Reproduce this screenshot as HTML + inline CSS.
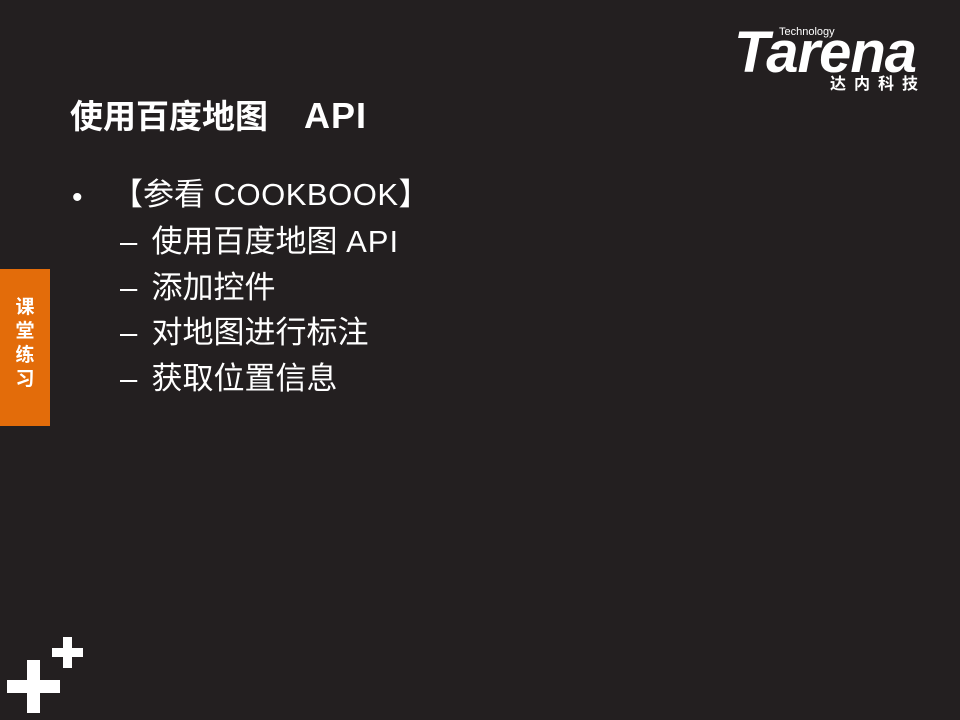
<!DOCTYPE html>
<html><head><meta charset="utf-8"><style>
body{margin:0;width:960px;height:720px;background:#231f20;position:relative;overflow:hidden;font-family:"Liberation Sans","Noto Sans CJK SC",sans-serif;color:#fff}
.a{position:absolute;white-space:nowrap}
.w{position:absolute;background:#fff}
.i{font-size:31px;line-height:40px}
</style></head><body>
<div class="a" style="left:70px;top:94px;font-size:33px;font-weight:bold;line-height:44px">使用百度地图<span style="margin-left:36px;font-size:36px;letter-spacing:1px">API</span></div>
<div class="a" style="left:72px;top:178px;font-size:30px;line-height:40px">•</div>
<div class="a i" style="left:112px;top:175px">【参看 <span style="letter-spacing:0.5px">COOKBOOK</span>】</div>
<div class="a i" style="left:120px;top:222px">–&nbsp;&nbsp;<span style="margin-left:-3px">使用百度地图 <span style="letter-spacing:1px">API</span></span></div>
<div class="a i" style="left:120px;top:268px">–&nbsp;&nbsp;<span style="margin-left:-3px">添加控件</span></div>
<div class="a i" style="left:120px;top:313px">–&nbsp;&nbsp;<span style="margin-left:-3px">对地图进行标注</span></div>
<div class="a i" style="left:120px;top:359px">–&nbsp;&nbsp;<span style="margin-left:-3px">获取位置信息</span></div>
<div class="a" style="left:0;top:269px;width:50px;height:157px;background:#e36c0a"></div>
<div class="a" style="left:13px;top:296px;width:24px;font-size:19px;font-weight:bold;line-height:24px;white-space:normal;text-align:center">课堂练习</div>
<div class="w" style="left:7px;top:680px;width:53px;height:13px"></div>
<div class="w" style="left:27px;top:660px;width:13px;height:53px"></div>
<div class="w" style="left:52px;top:648px;width:31px;height:9px"></div>
<div class="w" style="left:63px;top:637px;width:9px;height:31px"></div>
<div class="a" style="left:734px;top:23px;font-size:58px;font-weight:bold;font-style:italic;letter-spacing:-1px;line-height:60px">Tarena</div>
<div class="a" style="left:778px;top:26px;font-size:11px;line-height:12px;background:#231f20;padding:0 1px">Technology</div>
<div class="a" style="left:830px;top:75px;font-size:16px;font-weight:bold;letter-spacing:8px;line-height:20px">达内科技</div>
</body></html>
